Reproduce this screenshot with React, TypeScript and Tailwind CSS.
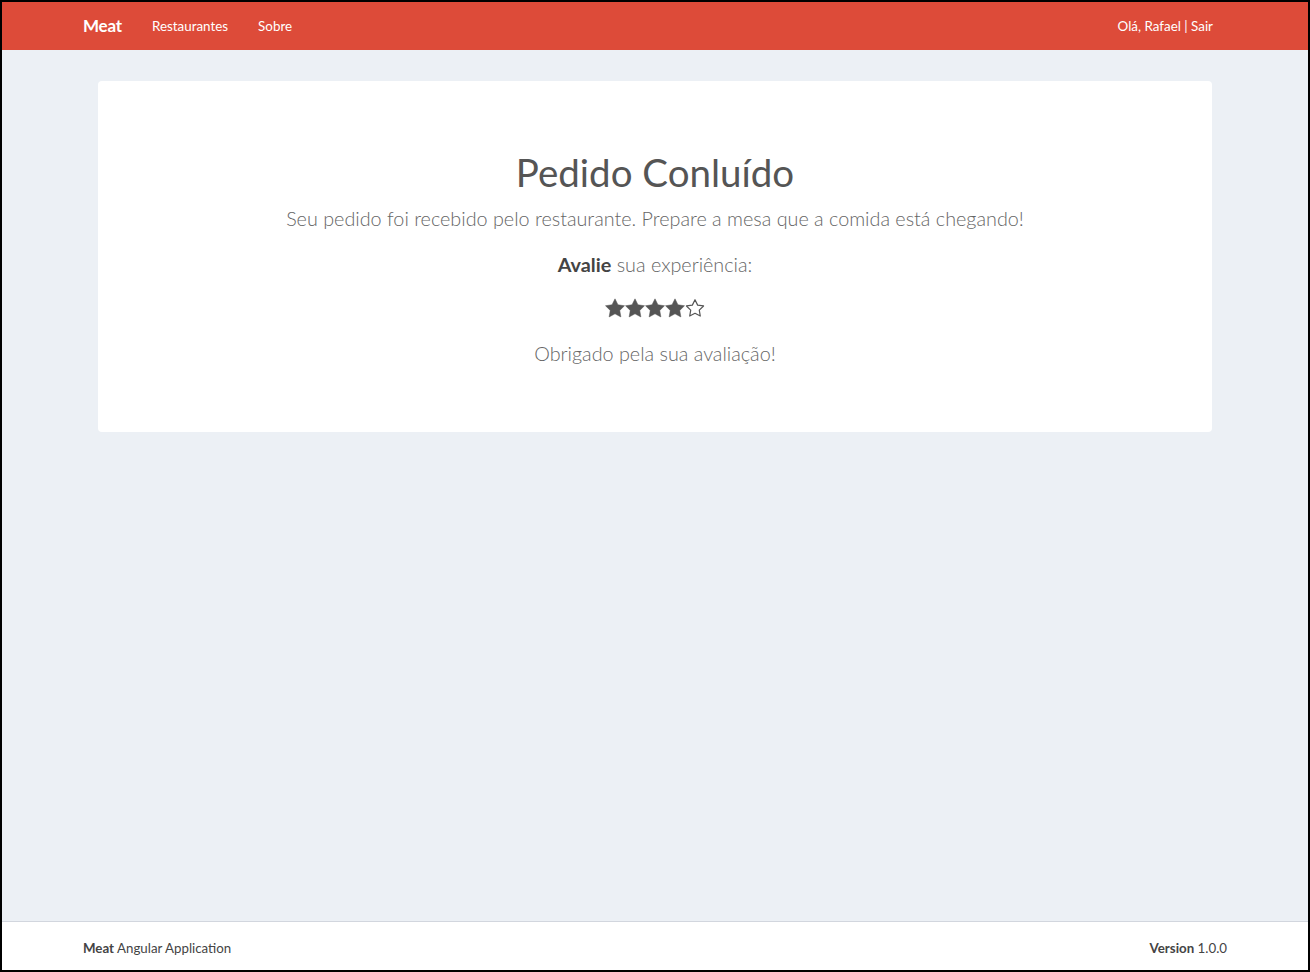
const FONT = "font-['Lato','Liberation_Sans',sans-serif]";

const STAR_PATH =
  "M12 1L15.53 8.15L23.41 9.29L17.71 14.85L19.05 22.71L12 19L4.95 22.71L6.29 14.85L0.59 9.29L8.47 8.15Z";

function Header() {
  return (
    <header className="h-[48px] bg-[#dd4b39] text-white">
      <div className="mx-auto flex h-full w-[1170px] items-center justify-between px-[13px]">
        <nav className="flex items-center">
          <a className="text-[17px] font-bold tracking-[-0.2px]">Meat</a>
          <a className="ml-[30px] text-[13.4px]">Restaurantes</a>
          <a className="ml-[30px] text-[13.4px]">Sobre</a>
        </nav>
        <div className="pr-[14px] text-[13.4px]">Olá, Rafael | Sair</div>
      </div>
    </header>
  );
}

function Stars({ value }: { value: number }) {
  return (
    <div className="flex justify-center">
      {[1, 2, 3, 4, 5].map((i) => (
        <svg
          key={i}
          viewBox="0 0 24 24"
          className="h-[20px] w-[20px] overflow-visible"
        >
          {i <= value ? (
            <path d={STAR_PATH} fill="#555" stroke="#555" strokeWidth={0.6} strokeLinejoin="round" />
          ) : (
            <path
              d={STAR_PATH}
              transform="translate(1.2 1.2) scale(0.9)"
              fill="none"
              stroke="#555"
              strokeWidth={1.6}
              strokeLinejoin="round"
            />
          )}
        </svg>
      ))}
    </div>
  );
}

function Footer() {
  return (
    <footer className="h-[49px] border-t border-[#d2d6de] bg-white text-[13.3px] text-[#444]">
      <div className="mx-auto flex h-full w-[1170px] items-center justify-between px-[13px] pt-[5px]">
        <div>
          <b>Meat</b> Angular Application
        </div>
        <div>
          <b>Version</b> 1.0.0
        </div>
      </div>
    </footer>
  );
}

export default function App() {
  return (
    <div
      className={`flex h-[972px] flex-col border-2 border-black bg-[#ecf0f5] ${FONT}`}
    >
      <Header />
      <main className="flex-1 pt-[31px]">
        <div className="mx-auto w-[1170px] px-[28px]">
          <div className="flex h-[351px] flex-col items-center rounded-[4px] bg-white pt-[66px] text-center">
            <h1 className="text-[38.5px] font-normal leading-[50px] text-[#555]">
              Pedido Conluído
            </h1>
            <p className="mt-[6px] text-[19.8px] leading-[30px] font-light text-[#666]">
              Seu pedido foi recebido pelo restaurante. Prepare a mesa que a
              comida está chegando!
            </p>
            <p className="mt-[16px] text-[19.8px] leading-[30px] font-light text-[#666]">
              <b className="font-bold text-[#444]">Avalie</b> sua experiência:
            </p>
            <div className="mt-[19px]">
              <Stars value={4} />
            </div>
            <p className="mt-[20px] text-[19.8px] leading-[30px] font-light text-[#666]">
              Obrigado pela sua avaliação!
            </p>
          </div>
        </div>
      </main>
      <Footer />
    </div>
  );
}
